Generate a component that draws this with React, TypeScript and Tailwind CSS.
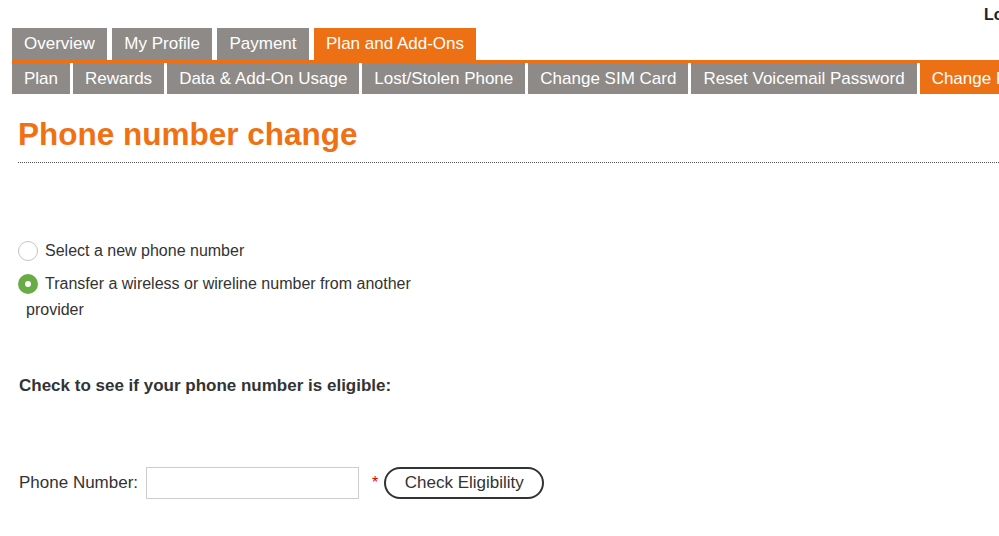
import React from "react";

const topTabs = [
  { label: "Overview", active: false },
  { label: "My Profile", active: false },
  { label: "Payment", active: false },
  { label: "Plan and Add-Ons", active: true },
];

const subTabs = [
  { label: "Plan", active: false },
  { label: "Rewards", active: false },
  { label: "Data & Add-On Usage", active: false },
  { label: "Lost/Stolen Phone", active: false },
  { label: "Change SIM Card", active: false },
  { label: "Reset Voicemail Password", active: false },
  { label: "Change Phone Number", active: true },
];

export default function App() {
  return (
    <div
      className="w-[999px] h-[536px] overflow-hidden bg-white text-[#333]"
      style={{ fontFamily: '"Liberation Sans", Arial, Helvetica, sans-serif' }}
    >
      <div className="w-[1300px]">
        <div className="flex pt-[5px] pl-[984px] h-[28px]">
          <span className="text-[16px] font-bold leading-[20px] whitespace-nowrap text-[#222]">Log Out</span>
        </div>
        <div className="flex gap-[5.5px] pl-[12px]">
          {topTabs.map((t) => (
            <div
              key={t.label}
              className={`h-[32px] px-[12px] text-[17px] leading-[32px] text-white whitespace-nowrap ${
                t.active ? "bg-[#ed7014]" : "bg-[#8e8a87]"
              }`}
            >
              {t.label}
            </div>
          ))}
        </div>
        <div className="ml-[12px] h-[3px] bg-[#ed7014]" />
        <div className="flex gap-[3px] pl-[12px]">
          {subTabs.map((t) => (
            <div
              key={t.label}
              className={`h-[31px] px-[12px] text-[17px] leading-[31px] text-white whitespace-nowrap ${
                t.active ? "bg-[#ed7014]" : "bg-[#8e8a87]"
              }`}
            >
              {t.label}
            </div>
          ))}
        </div>
      </div>

      <div className="ml-[19px]">
        <h1 className="mt-[22px] -ml-[1px] text-[31.5px] leading-[36px] font-bold text-[#ef7114] pb-[10px] border-b border-dotted border-[#555]">
          Phone number change
        </h1>

        <div className="mt-[75px] flex items-center h-[26px] text-[16px]">
          <span className="-ml-[1px] w-[20px] h-[20px] rounded-full border border-[#c4c4c4] bg-white shrink-0" />
          <span className="ml-[7px]">Select a new phone number</span>
        </div>

        <div className="mt-[7px] ml-[7px] w-[394px] text-[16px] leading-[26px]">
          <span className="-ml-[8px] mr-[7px] mt-[3px] inline-flex w-[20px] h-[20px] rounded-full bg-[#69ab45] items-center justify-center align-top">
            <span className="w-[6px] h-[6px] rounded-full bg-white" />
          </span>
          Transfer a wireless or wireline number from another provider
        </div>

        <div className="mt-[51px] text-[17px] leading-[24px] font-bold">
          Check to see if your phone number is eligible:
        </div>

        <div className="mt-[69px] flex items-center">
          <span className="text-[17px] leading-[20px]">Phone Number:</span>
          <input
            type="text"
            className="ml-[8px] w-[213px] h-[32px] border border-[#cccccc] bg-white outline-none"
          />
          <span className="ml-[13px] text-[16px] leading-[20px] text-[#e00000]">*</span>
          <button className="ml-[6px] w-[160px] h-[32px] rounded-full border-2 border-[#333] bg-white text-[17px] text-[#333] leading-[28px]">
            Check Eligibility
          </button>
        </div>
      </div>
    </div>
  );
}
